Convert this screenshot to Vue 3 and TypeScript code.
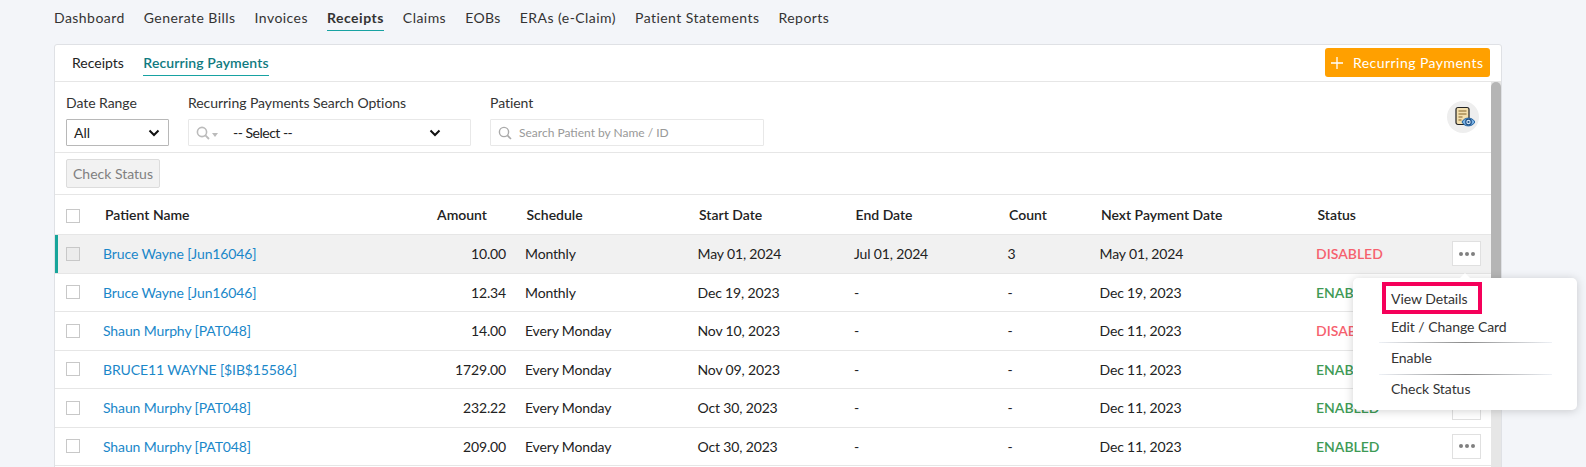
<script setup lang="ts">
interface Row {
  name: string
  amount: string
  schedule: string
  start: string
  end: string
  count: string
  next: string
  status: 'ENABLED' | 'DISABLED'
}

const navItems = ['Dashboard', 'Generate Bills', 'Invoices', 'Receipts', 'Claims', 'EOBs', 'ERAs (e-Claim)', 'Patient Statements', 'Reports']

const rows: Row[] = [
  { name: 'Bruce Wayne [Jun16046]', amount: '10.00', schedule: 'Monthly', start: 'May 01, 2024', end: 'Jul 01, 2024', count: '3', next: 'May 01, 2024', status: 'DISABLED' },
  { name: 'Bruce Wayne [Jun16046]', amount: '12.34', schedule: 'Monthly', start: 'Dec 19, 2023', end: '-', count: '-', next: 'Dec 19, 2023', status: 'ENABLED' },
  { name: 'Shaun Murphy [PAT048]', amount: '14.00', schedule: 'Every Monday', start: 'Nov 10, 2023', end: '-', count: '-', next: 'Dec 11, 2023', status: 'DISABLED' },
  { name: 'BRUCE11 WAYNE [$IB$15586]', amount: '1729.00', schedule: 'Every Monday', start: 'Nov 09, 2023', end: '-', count: '-', next: 'Dec 11, 2023', status: 'ENABLED' },
  { name: 'Shaun Murphy [PAT048]', amount: '232.22', schedule: 'Every Monday', start: 'Oct 30, 2023', end: '-', count: '-', next: 'Dec 11, 2023', status: 'ENABLED' },
  { name: 'Shaun Murphy [PAT048]', amount: '209.00', schedule: 'Every Monday', start: 'Oct 30, 2023', end: '-', count: '-', next: 'Dec 11, 2023', status: 'ENABLED' },
]
</script>

<template>
  <div class="page">
    <nav class="nav">
      <a v-for="item in navItems" :key="item" class="nav-item" :class="{ active: item === 'Receipts' }">{{ item }}</a>
    </nav>

    <section class="card">
      <header class="tabs">
        <a class="tab">Receipts</a>
        <a class="tab active">Recurring Payments</a>
        <button class="add-btn">
          <svg class="plus" width="12" height="12" viewBox="0 0 12 12"><path d="M6 0v12M0 6h12" stroke="#fff" stroke-width="1.3" /></svg>
          Recurring Payments
        </button>
      </header>

      <div class="body">
        <div class="content">
          <div class="filters">
            <div class="field date">
              <label>Date Range</label>
              <div class="select">
                <span>All</span>
                <svg class="chev" width="12" height="8" viewBox="0 0 12 8"><path d="M1.5 1.5 6 6l4.5-4.5" fill="none" stroke="#111" stroke-width="2" /></svg>
              </div>
            </div>
            <div class="field options">
              <label>Recurring Payments Search Options</label>
              <div class="select light">
                <svg class="lens" width="14" height="14" viewBox="0 0 14 14"><circle cx="6" cy="6" r="4.6" fill="none" stroke="#bbb" stroke-width="1.6" /><path d="m9.4 9.4 3.6 3.6" stroke="#bbb" stroke-width="1.8" /></svg>
                <svg class="caret" width="6" height="4" viewBox="0 0 6 4"><path d="M0 0h6L3 4z" fill="#bbb" /></svg>
                <span class="select-text">-- Select --</span>
                <svg class="chev" width="12" height="8" viewBox="0 0 12 8"><path d="M1.5 1.5 6 6l4.5-4.5" fill="none" stroke="#111" stroke-width="2" /></svg>
              </div>
            </div>
            <div class="field patient">
              <label>Patient</label>
              <div class="select light">
                <svg class="lens" width="14" height="14" viewBox="0 0 14 14"><circle cx="6" cy="6" r="4.6" fill="none" stroke="#aaa" stroke-width="1.4" /><path d="m9.4 9.4 3.6 3.6" stroke="#aaa" stroke-width="1.6" /></svg>
                <span class="placeholder">Search Patient by Name / ID</span>
              </div>
            </div>
            <div class="eye-btn">
              <svg width="24" height="24" viewBox="0 0 24 24">
                <rect x="5" y="2.500" width="13" height="17" rx="2" fill="#f3dfae" stroke="#222" stroke-width="1.2" />
                <path d="M7.500 6h8M7.500 9h8M7.500 12h4M7.500 15h3" stroke="#a98d55" stroke-width="1.3" />
                <path d="M11 17c2.600-5.200 10-5.200 13 0-3 5.200-10.400 5.200-13 0z" fill="#7db4e6" stroke="#1d5f9e" stroke-width="1" />
                <circle cx="17.500" cy="17" r="2.800" fill="#cfe4f7" stroke="#1d4f86" stroke-width="1.200" />
                <circle cx="17.500" cy="17" r="1.100" fill="#1d4f86" />
              </svg>
            </div>
          </div>

          <div class="toolbar">
            <button class="check-btn">Check Status</button>
          </div>

          <div class="row head">
            <span class="cb"><i class="box" /></span>
            <span class="name">Patient Name</span>
            <span class="amount">Amount</span>
            <span>Schedule</span>
            <span>Start Date</span>
            <span>End Date</span>
            <span>Count</span>
            <span>Next Payment Date</span>
            <span>Status</span>
            <span />
          </div>

          <div v-for="(r, i) in rows" :key="i" class="row item" :class="{ selected: i === 0 }">
            <span class="cb"><i class="box" /></span>
            <a class="name link">{{ r.name }}</a>
            <span class="amount">{{ r.amount }}</span>
            <span>{{ r.schedule }}</span>
            <span>{{ r.start }}</span>
            <span>{{ r.end }}</span>
            <span>{{ r.count }}</span>
            <span>{{ r.next }}</span>
            <span class="status" :class="r.status.toLowerCase()">{{ r.status }}</span>
            <span class="action"><button class="more"><i /><i /><i /></button></span>
          </div>
        </div>

        <div class="scrollbar"><div class="thumb" /></div>
      </div>
    </section>

    <div class="menu">
      <span class="arrow" />
      <a class="menu-item highlighted">View Details</a>
      <a class="menu-item second">Edit / Change Card</a>
      <a class="menu-item ruled">Enable</a>
      <a class="menu-item ruled last">Check Status</a>
    </div>
  </div>
</template>

<style>
html,
body {
  margin: 0;
  background: #f3f5f9;
}
</style>

<style scoped>
.page {
  position: relative;
  width: 1586px;
  height: 467px;
  overflow: hidden;
  padding-left: 54px;
  box-sizing: border-box;
  background: #f3f5f9;
  font-family: Lato, "Liberation Sans", sans-serif;
  font-size: 14px;
  color: #222;
}

.nav {
  display: flex;
  gap: 19px;
  height: 44px;
  box-sizing: border-box;
  padding-top: 9px;
  letter-spacing: 0.45px;
}

.nav-item {
  height: 21px;
  line-height: 18px;
  color: #333;
}

.nav-item.active {
  font-weight: 700;
  letter-spacing: 0.5px;
  border-bottom: 1px solid #17a2a2;
}

.card {
  width: 1448px;
  height: 440px;
  box-sizing: border-box;
  background: #fff;
  border: 1px solid #dfe1e5;
  border-radius: 3px 3px 0 0;
}

.tabs {
  display: flex;
  align-items: flex-start;
  gap: 19.5px;
  height: 36px;
  box-sizing: content-box;
  padding: 0 11px 0 17px;
  border-bottom: 1px solid #e6e6e6;
}

.tab {
  height: 30px;
  line-height: 35px;
  color: #222;
}

.tab.active {
  color: #0f7a80;
  font-weight: 600;
  letter-spacing: 0.1px;
  border-bottom: 1px solid #17a2a2;
}

.add-btn {
  margin: 3px 0 0 auto;
  width: 165px;
  height: 29px;
  border: 0;
  border-radius: 3px;
  background: #ffa000;
  color: #fff;
  font: 14px Lato, sans-serif;
  letter-spacing: 0.45px;
  display: flex;
  align-items: center;
  padding: 0 0 0 6px;
  white-space: nowrap;
}

.plus {
  margin-right: 10px;
}

.body {
  display: flex;
  height: 400px;
}

.content {
  flex: 1;
  min-width: 0;
}

.filters {
  display: flex;
  height: 70px;
  box-sizing: content-box;
  padding-left: 11px;
  border-bottom: 1px solid #e6e6e6;
  position: relative;
}

.field {
  display: flex;
  flex-direction: column;
  padding-top: 12px;
}

.field label {
  line-height: 18px;
  margin-bottom: 7px;
  color: #333;
  letter-spacing: -0.05px;
}

.date {
  width: 122px;
}

.options {
  width: 302px;
}

.patient {
  width: 274px;
}

.select {
  display: flex;
  align-items: center;
  height: 27px;
  box-sizing: border-box;
  padding: 0 7px;
  border: 1px solid #b8b8b8;
  border-radius: 1px;
  position: relative;
}

.date .select {
  width: 103px;
}

.options .select {
  width: 283px;
}

.patient .select {
  width: 274px;
}

.select.light {
  border-color: #e8e8e8;
}

.chev {
  margin-left: auto;
  margin-right: 1px;
}

.options .chev {
  margin-right: 22px;
}

.select-text {
  margin-left: 15px;
  color: #222;
  letter-spacing: -0.5px;
}

.caret {
  margin: 5px 0 0 2px;
}

.placeholder {
  margin-left: 7px;
  font-size: 12px;
  color: #999;
}

.eye-btn {
  position: absolute;
  top: 19px;
  right: 12px;
  width: 32px;
  height: 32px;
  border-radius: 50%;
  background: #eeeeee;
  display: flex;
  align-items: center;
  justify-content: center;
}

.toolbar {
  height: 41px;
  box-sizing: content-box;
  padding-left: 11px;
  border-bottom: 1px solid #e6e6e6;
}

.check-btn {
  margin-top: 6px;
  width: 94px;
  height: 29px;
  border: 1px solid #dcdcdc;
  border-radius: 2px;
  background: #f2f2f2;
  color: #808080;
  font: 14px/25px Lato, sans-serif;
  padding: 0 0 1px;
}

.row {
  display: grid;
  grid-template-columns: 48px 297px 125px 172.5px 156.5px 153.5px 92px 216.5px 136px 1fr;
  align-items: center;
  box-sizing: border-box;
  position: relative;
  white-space: nowrap;
}

.head {
  height: 40px;
  font-weight: 600;
  color: #222;
  border-bottom: 1px solid #e6e6e6;
}

.head .name {
  padding-left: 2px;
}

.head .amount {
  text-align: right;
  padding-right: 38px;
}

.head > span:nth-child(n + 4) {
  padding-left: 1.5px;
}

.head .cb {
  padding-top: 2px;
}

.item {
  height: 38.5px;
  letter-spacing: -0.15px;
  border-bottom: 1px solid #e6e6e6;
}

.item.selected {
  background: #f1f1f1;
  box-shadow: inset 3px 0 0 #17a59b;
}

.item .amount {
  text-align: right;
  padding-right: 19px;
}

.cb {
  padding-left: 11px;
}

.box {
  display: block;
  width: 14px;
  height: 14px;
  border: 1px solid #c8c8c8;
  box-sizing: border-box;
  background: #fff;
}

.selected .box {
  background: #ececec;
}

.link {
  color: #1a87c9;
  letter-spacing: -0.12px;
}

.status {
  font-weight: 600;
  letter-spacing: 0;
}

.status.enabled {
  color: #3e9a55;
}

.status.disabled {
  color: #f6616e;
}

.action {
  display: flex;
}

.more {
  width: 29px;
  height: 25px;
  box-sizing: border-box;
  padding: 0;
  border: 1px solid #e0e0e0;
  background: #fff;
  display: flex;
  align-items: center;
  justify-content: center;
  gap: 2px;
}

.more i {
  width: 4px;
  height: 4px;
  border-radius: 50%;
  background: #808080;
}

.scrollbar {
  width: 10px;
  flex: none;
  background: #e6e6e6;
}

.thumb {
  height: 220px;
  border-radius: 5px 5px 0 0;
  background: #b5b5b5;
}

.menu {
  position: absolute;
  left: 1353px;
  top: 278px;
  width: 224px;
  height: 132px;
  box-sizing: border-box;
  padding: 7px 25px 0 26px;
  background: #fff;
  border-radius: 5px;
  box-shadow: 0 1px 10px rgba(0, 0, 0, 0.18);
}

.arrow {
  position: absolute;
  left: 107px;
  top: -5px;
  border: 5px solid transparent;
  border-top: 0;
  border-bottom-color: #fff;
}

.menu-item {
  display: block;
  padding-left: 12px;
  height: 28px;
  line-height: 28px;
  color: #333;
  letter-spacing: -0.05px;
}

.menu-item.second {
  height: 29px;
}

.menu-item.ruled {
  height: 32px;
  line-height: 31px;
  background: linear-gradient(90deg, #eef1f6, #8a8a8a 50%, #eef1f6) top / 100% 1px no-repeat;
}

.menu-item.last {
  line-height: 30px;
}

.highlighted::after {
  content: "";
  position: absolute;
  left: 29px;
  top: 4px;
  width: 100px;
  height: 32px;
  box-sizing: border-box;
  border: 4px solid #f5005a;
}
</style>
